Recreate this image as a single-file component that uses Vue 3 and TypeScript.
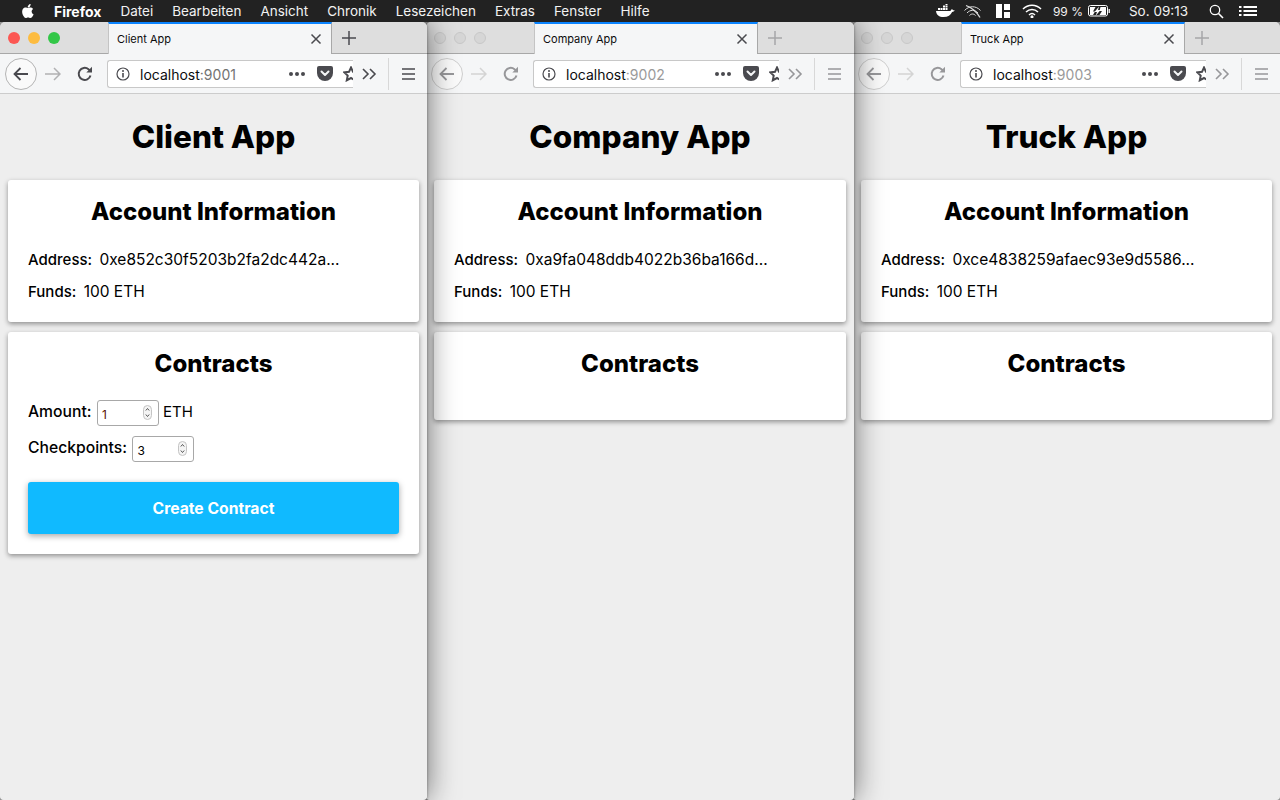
<script setup lang="ts">
interface BrowserWindow {
  title: string
  port: string
  address: string
  active: boolean
  canCreate: boolean
}

const menuItems = ['Datei', 'Bearbeiten', 'Ansicht', 'Chronik', 'Lesezeichen', 'Extras', 'Fenster', 'Hilfe']

const windows: BrowserWindow[] = [
  { title: 'Client App', port: '9001', address: '0xe852c30f5203b2fa2dc442a...', active: true, canCreate: true },
  { title: 'Company App', port: '9002', address: '0xa9fa048ddb4022b36ba166d...', active: false, canCreate: false },
  { title: 'Truck App', port: '9003', address: '0xce4838259afaec93e9d5586...', active: false, canCreate: false },
]
</script>

<template>
  <div class="desktop">
    <header class="menubar">
      <svg class="apple" width="14" height="16" viewBox="0 0 14 16">
        <path fill="#fff" d="M11.6 8.5c0-1.7 1.4-2.5 1.5-2.6-.8-1.2-2.100-1.400-2.500-1.400-1.100-.1-2.100.6-2.700.6-.5 0-1.400-.6-2.300-.6-1.200 0-2.300.7-2.900 1.700-1.200 2.200-.3 5.400.9 7.100.6.8 1.300 1.800 2.200 1.700.9 0 1.200-.6 2.300-.6s1.400.6 2.300.6c1 0 1.600-.8 2.200-1.700.7-1 1-1.900 1-2-.1 0-1.900-.8-2-2.800zM9.900 3.400c.5-.6.800-1.400.7-2.300-.7 0-1.600.5-2.100 1.100-.5.5-.9 1.400-.8 2.200.8.1 1.700-.4 2.200-1z" />
      </svg>
      <strong class="menubar__app">Firefox</strong>
      <span v-for="item in menuItems" :key="item" class="menubar__item">{{ item }}</span>
      <div class="menubar__status">
        <svg width="20" height="14" viewBox="0 0 20 14">
          <path fill="#fff" d="M1 7h14.500c.4-1.200 1.200-1.800 2-1.600.300.7 1.400.9 2.200.9-.5 1.200-1.500 1.700-2.600 1.700C15.800 11 13 13 8.500 13 4 13 1.500 11 1 7z" />
          <path fill="#fff" d="M3 4h2v2H3zm2.500 0h2v2h-2zm2.500 0h2v2H8zm0-2.500h2v2H8zM10.500 4h2v2h-2zm0-2.500h2v2h-2zm0-1.500h2v1h-2z" />
        </svg>
        <svg class="status__wifi-off" width="20" height="14" viewBox="0 0 20 14" fill="none" stroke="#ddd" stroke-width="1">
          <path d="M1.500 6.500C6 1.500 13 1.500 17.500 6.500M4 9c3-3.500 8-3.500 11 0M6.500 11.500c1.800-2 4.200-2 6 0" />
          <path d="M3 1.500c5 1.500 11 6.500 14 12" stroke-width="1.300" />
        </svg>
        <svg class="status__grid" width="14" height="14" viewBox="0 0 14 14">
          <path fill="#fff" d="M0 0h6v14H0zM8 0h6v6H8zM8 8h6v6H8z" />
        </svg>
        <svg class="status__wifi" width="20" height="14" viewBox="0 0 20 14" fill="none" stroke="#fff" stroke-width="1.500">
          <path d="M1 5c5-5 13-5 18 0M4 8c3.500-3.500 8.500-3.500 12 0M7 11c1.800-1.700 4.200-1.700 6 0" />
          <circle cx="10" cy="12.800" r=".8" fill="#fff" />
        </svg>
        <span class="status__percent">99 %</span>
        <svg class="status__battery" width="23" height="12" viewBox="0 0 23 12">
          <rect x=".5" y=".5" width="19" height="10.500" rx="2" fill="none" stroke="#fff" />
          <rect x="20.500" y="4" width="1.500" height="4" fill="#ddd" />
          <path fill="#fff" d="M2 2h5.500L5 6.500h2L5 10H2zM12.500 2H18v8h-6.500l2.500-4h-2.500z" />
          <path fill="#fff" d="M11 1.500 6.500 7h2.500L7.500 11 12.500 5h-2.500z" />
        </svg>
        <span class="status__clock">So. 09:13</span>
        <svg class="status__search" width="15" height="15" viewBox="0 0 15 15" fill="none" stroke="#fff" stroke-width="1.300">
          <circle cx="6" cy="6" r="4.700" />
          <path d="m9.500 9.500 4.500 4.500" stroke-width="1.600" />
        </svg>
        <svg class="status__list" width="18" height="12" viewBox="0 0 18 12">
          <path fill="#fff" d="M0 1h2.500v2H0zM4.500 1H18v2H4.500zM0 5h2.500v2H0zM4.500 5H18v2H4.500zM0 9h2.500v2H0zM4.500 9H18v2H4.500z" />
        </svg>
      </div>
    </header>

    <main class="windows">
      <section
        v-for="win in windows"
        :key="win.port"
        class="window"
        :class="{ 'window--inactive': !win.active }"
      >
        <div class="tabstrip">
          <div class="lights">
            <i class="light light--close" />
            <i class="light light--min" />
            <i class="light light--max" />
          </div>
          <div class="tab">
            <span class="tab__title">{{ win.title }}</span>
            <svg class="tab__close" width="12" height="12" viewBox="0 0 12 12" stroke="#4a4a4f" stroke-width="1.500">
              <path d="m1.500 1.500 9 9m0-9-9 9" />
            </svg>
          </div>
          <svg class="newtab" width="16" height="16" viewBox="0 0 16 16" stroke="currentColor" stroke-width="1.500">
            <path d="M8 1v14M1 8h14" />
          </svg>
        </div>

        <div class="toolbar">
          <button class="back">
            <svg width="18" height="16" viewBox="0 0 18 16" fill="none" stroke="currentColor" stroke-width="1.800">
              <path d="M16 8H2.500M8.500 2 2.500 8l6 6" />
            </svg>
          </button>
          <svg class="forward" width="16" height="14" viewBox="0 0 16 14" fill="none" stroke="#b1b1b3" stroke-width="1.500">
            <path d="M0 7h15M9 1l6 6-6 6" />
          </svg>
          <svg class="reload" width="16" height="16" viewBox="0 0 16 16" fill="none" stroke="currentColor" stroke-width="2">
            <path d="M13.500 9.500A6 6 0 1 1 11.500 3.200L14 5" />
            <path d="M15 .8v5.700H9.300z" fill="currentColor" stroke="none" />
          </svg>
          <div class="urlbar">
            <svg class="urlbar__info" width="14" height="14" viewBox="0 0 14 14" fill="none" stroke="#4a4a4f">
              <circle cx="7" cy="7" r="6" stroke-width="1.200" />
              <path d="M7 6v4.500" stroke-width="1.600" />
              <circle cx="7" cy="3.900" r="1" fill="#4a4a4f" stroke="none" />
            </svg>
            <span class="urlbar__host">localhost<span class="urlbar__port">:{{ win.port }}</span></span>
            <span class="urlbar__dots"><i /><i /><i /></span>
            <svg class="urlbar__pocket" width="16" height="15" viewBox="0 0 16 15">
              <path fill="#4a4a4f" d="M2 0h12a2 2 0 0 1 2 2v5a8 8 0 0 1-16 0V2a2 2 0 0 1 2-2z" />
              <path fill="none" stroke="#f5f6f7" stroke-width="2" stroke-linecap="round" stroke-linejoin="round" d="m4.500 5.500 3.500 3.500 3.500-3.500" />
            </svg>
            <svg class="urlbar__star" width="16" height="16" viewBox="0 0 16 16">
              <path fill="none" stroke="#4a4a4f" stroke-width="2" d="m8 1.500 2 4.300 4.700.6-3.400 3.200.9 4.700L8 12l-4.200 2.300.9-4.700L1.300 6.400 6 5.800z" />
            </svg>
          </div>
          <svg class="overflow" width="15" height="12" viewBox="0 0 15 12" fill="none" stroke="currentColor" stroke-width="1.600">
            <path d="m1 1 5 5-5 5M8 1l5 5-5 5" />
          </svg>
          <i class="toolbar__sep" />
          <svg class="hamburger" width="13" height="12" viewBox="0 0 13 12" stroke="currentColor" stroke-width="1.500">
            <path d="M0 1h13M0 6h13M0 11h13" />
          </svg>
        </div>

        <div class="page">
          <h1 class="page__title">{{ win.title }}</h1>
          <div class="card">
            <h2 class="card__title">Account Information</h2>
            <p class="row"><b>Address:</b> {{ win.address }}</p>
            <p class="row"><b>Funds:</b> 100 ETH</p>
          </div>
          <div class="card card--contracts">
            <h2 class="card__title">Contracts</h2>
            <form v-if="win.canCreate" class="form" @submit.prevent>
              <label class="field">
                <b>Amount:</b>
                <span class="number">
                  <input class="number__input number__input--amount" value="1" readonly />
                  <svg class="spinner" width="9" height="15" viewBox="0 0 9 15" fill="none">
                    <rect x=".5" y=".5" width="8" height="14" rx="4" fill="#f4f4f4" stroke="#c4c4c4" />
                    <path d="m2.800 5.500 1.700-2 1.700 2M2.800 9.500l1.700 2 1.700-2" stroke="#444" stroke-width=".9" />
                  </svg>
                </span>
                <span class="field__unit">ETH</span>
              </label>
              <label class="field">
                <b>Checkpoints:</b>
                <span class="number">
                  <input class="number__input" value="3" readonly />
                  <svg class="spinner" width="9" height="15" viewBox="0 0 9 15" fill="none">
                    <rect x=".5" y=".5" width="8" height="14" rx="4" fill="#f4f4f4" stroke="#c4c4c4" />
                    <path d="m2.800 5.500 1.700-2 1.700 2M2.800 9.500l1.700 2 1.700-2" stroke="#444" stroke-width=".9" />
                  </svg>
                </span>
              </label>
              <button class="create" type="submit">Create Contract</button>
            </form>
          </div>
        </div>
      </section>
    </main>
  </div>
</template>

<style scoped>
.desktop {
  width: 1280px;
  height: 800px;
  overflow: hidden;
  display: flex;
  flex-direction: column;
  background: #bdbdbd;
  font-family: Inter, "Liberation Sans", sans-serif;
  color: #000;
}

.menubar {
  position: relative;
  z-index: 10;
  flex: none;
  height: 22px;
  display: flex;
  align-items: center;
  padding: 0 0 0 20px;
  background: #222222;
  color: #f2f2f2;
  font-size: 13.5px;
}

.apple {
  margin-right: 20px;
}

.menubar__app {
  margin-right: 19px;
  font-size: 14px;
  font-weight: 700;
  color: #fff;
}

.menubar__item {
  margin-right: 19px;
}

.menubar__status {
  margin-left: auto;
  display: flex;
  align-items: center;
  padding-right: 23px;
  font-size: 13px;
}

.status__wifi-off {
  margin-left: 8px;
}

.status__grid {
  margin-left: 13px;
}

.status__wifi {
  margin-left: 12px;
}

.status__percent {
  margin-left: 11px;
  font-size: 12px;
}

.status__battery {
  margin-left: 5px;
}

.status__clock {
  margin-left: 18px;
  font-size: 13.5px;
}

.status__search {
  margin-left: 21px;
}

.status__list {
  margin-left: 15px;
}

.windows {
  flex: 1;
  min-height: 0;
  display: flex;
}

.window {
  position: relative;
  flex: 0 0 427px;
  display: flex;
  flex-direction: column;
  overflow: hidden;
  border-radius: 5px 5px 4px 4px;
  box-shadow: 0 0 30px rgba(0, 0, 0, 0.55), 0 0 3px rgba(0, 0, 0, 0.4);
  color: #0c0c0d;
}

.window:nth-child(1) {
  z-index: 3;
}

.window:nth-child(2) {
  z-index: 2;
  flex-basis: 428px;
  margin-left: -1px;
}

.window:nth-child(3) {
  z-index: 1;
  margin-left: -1px;
}

.tabstrip {
  flex: none;
  height: 32px;
  display: flex;
  background: #dedede;
  box-shadow: inset 0 -1px 0 #a8a8a8;
  color: #4a4a4f;
}

.lights {
  flex: 0 0 108px;
  box-sizing: border-box;
  display: flex;
  gap: 8px;
  padding: 10px 0 0 8px;
}

.light {
  width: 12px;
  height: 12px;
  border-radius: 50%;
  box-sizing: border-box;
}

.light--close {
  background: #fc5753;
}

.light--min {
  background: #fdbc40;
}

.light--max {
  background: #33c748;
}

.window--inactive .light {
  background: #d6d6d6;
  border: 1px solid #c8c8c8;
}

.tab {
  flex: 0 0 224px;
  display: flex;
  align-items: center;
  justify-content: space-between;
  box-sizing: border-box;
  padding: 0 9px 0 8px;
  background: #f5f6f7;
  border-top: 2px solid #0a84ff;
  border-right: 1px solid #a8a8a8;
  border-left: 1px solid #c4c4c4;
  font-size: 11px;
  color: #0c0c0d;
}

.newtab {
  margin: 8px 0 0 9px;
}

.window--inactive .newtab {
  color: #a6a6a8;
}

.toolbar {
  flex: none;
  height: 40px;
  display: flex;
  align-items: center;
  box-sizing: border-box;
  padding-left: 5px;
  background: #f5f6f7;
  border-bottom: 1px solid #cccccc;
  color: #4a4a4f;
}

.window--inactive .toolbar {
  color: #97979a;
}

.back {
  flex: none;
  width: 32px;
  height: 32px;
  padding: 0;
  display: flex;
  align-items: center;
  justify-content: center;
  background: #fafafa;
  border: 1px solid #b4b4b4;
  border-radius: 50%;
  color: inherit;
}

.window--inactive .back {
  border-color: #cfcfcf;
}

.forward {
  flex: none;
  margin-left: 8px;
}

.window--inactive .forward {
  stroke: #d4d4d4;
}

.reload {
  flex: none;
  margin-left: 16px;
}

.urlbar {
  flex: none;
  width: 246px;
  height: 28px;
  margin-left: 14px;
  display: flex;
  align-items: center;
  box-sizing: border-box;
  padding-left: 8px;
  overflow: hidden;
  background: #fff;
  border: 1px solid #c8c8c8;
  border-right: none;
  border-radius: 3px 0 0 3px;
}

.urlbar__info {
  flex: none;
}

.urlbar__host {
  flex: none;
  margin-left: 10px;
  padding-top: 1px;
  width: 149px;
  font-size: 14px;
  color: #0c0c0d;
}

.urlbar__port {
  color: #737373;
}

.window--inactive .urlbar__port {
  color: #9a9a9a;
}

.urlbar__dots {
  flex: none;
  display: flex;
  gap: 2px;
}

.urlbar__dots i {
  width: 4px;
  height: 4px;
  border-radius: 50%;
  background: #4a4a4f;
}

.urlbar__pocket {
  flex: none;
  margin-left: 12px;
}

.urlbar__star {
  flex: none;
  margin-left: 10px;
}

.overflow {
  flex: none;
  margin-left: 9px;
}

.toolbar__sep {
  flex: none;
  width: 1px;
  height: 32px;
  margin-left: 11px;
  background: #d8d8d8;
}

.hamburger {
  flex: none;
  margin-left: 13px;
}

.page {
  flex: 1;
  min-height: 0;
  padding: 0 8px;
  background: #eeeeee;
}

.page__title {
  margin: 0;
  padding: 25px 0 26px;
  font-size: 31.5px;
  line-height: 35px;
  font-weight: 800;
  text-align: center;
  color: #000;
}

.card {
  display: flow-root;
  margin-bottom: 10px;
  padding: 18px 20px 8px;
  background: #fff;
  border-radius: 3px;
  box-shadow: 0 2px 5px rgba(0, 0, 0, 0.4);
}

.card--contracts {
  padding-bottom: 19px;
}

.card__title {
  margin: 0 0 25px;
  font-size: 24px;
  line-height: 27px;
  font-weight: 800;
  text-align: center;
  color: #000;
}

.card--contracts .card__title {
  margin-bottom: 24px;
}

.row {
  margin: 0 0 12px;
  font-size: 15.5px;
  line-height: 20px;
  color: #000;
}

.row b {
  margin-right: 3px;
  font-size: 15px;
}

b {
  font-weight: 500;
}

.form {
  display: flex;
  flex-direction: column;
  margin: -1px 0 1px;
}

.field {
  display: flex;
  align-items: flex-start;
  gap: 5.500px;
  height: 26px;
  margin-bottom: 10px;
  font-size: 15.7px;
  line-height: 24px;
  color: #000;
}

.field__unit {
  margin-left: -1.500px;
  font-size: 15px;
}

.number {
  position: relative;
  width: 62px;
  height: 26px;
}

.number__input {
  width: 100%;
  height: 100%;
  box-sizing: border-box;
  padding: 2px 0 0 4px;
  background: #fff;
  border: 1px solid #a8a8a8;
  border-radius: 3px;
  outline: none;
  font: 12px Inter, "Liberation Sans", sans-serif;
  color: #000;
}

.number__input--amount {
  color: #5a1500;
}

.spinner {
  position: absolute;
  top: 5px;
  right: 7px;
}

.create {
  height: 52px;
  margin-top: 10px;
  background: #10baff;
  border: none;
  border-radius: 3px;
  box-shadow: 0 2px 6px rgba(0, 0, 0, 0.35);
  font: 700 15.7px Inter, "Liberation Sans", sans-serif;
  color: #fff;
}
</style>
